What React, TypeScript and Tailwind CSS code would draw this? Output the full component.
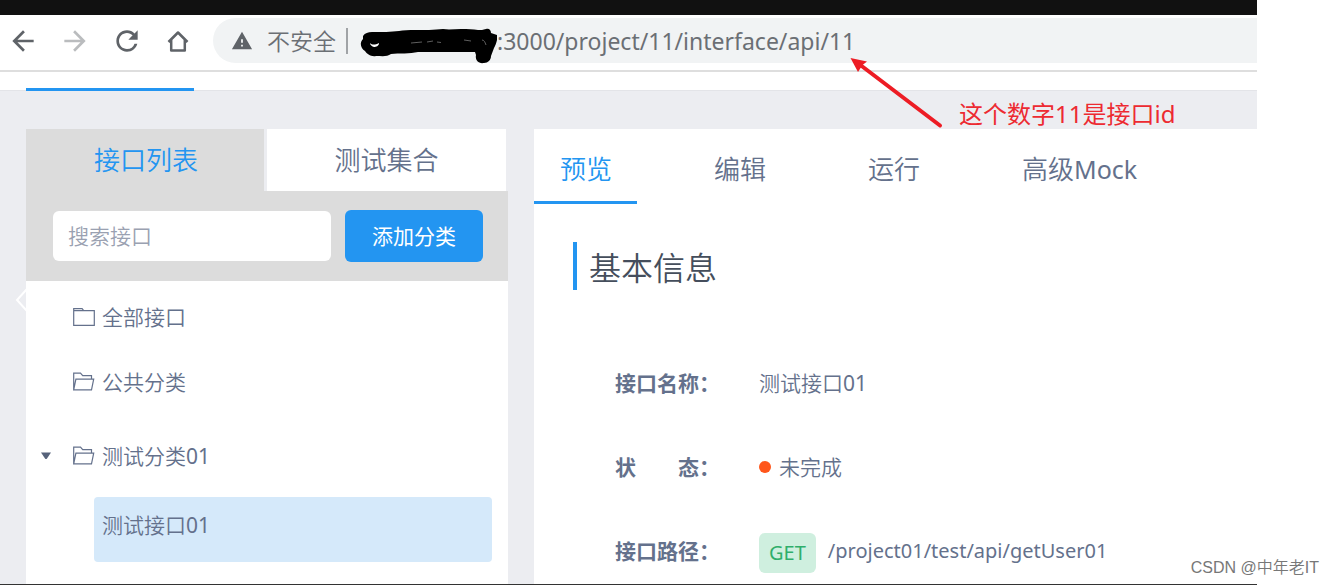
import { useState } from "react";
import type { ReactNode } from "react";
import { MdArrowBack, MdArrowForward, MdRefresh, MdWarning } from "react-icons/md";

function HomeIcon() {
  return (
    <svg width="32" height="32" viewBox="0 0 32 32" fill="none" stroke="#5f6368" strokeWidth="2.5" aria-hidden="true">
      <path d="M5.500 17 15 7.500 24.500 17M8.200 14.500V25.500h13.600V14.500" strokeLinejoin="round" />
    </svg>
  );
}

function FolderIcon() {
  return (
    <svg width="23" height="20" viewBox="0 0 23 20" fill="none" stroke="#64718c" strokeWidth="1.2" aria-hidden="true">
      <path d="M.7 18.300V1.700h8.400l1.600 2h10.600v14.600zM.7 3.700h10" />
    </svg>
  );
}

function FolderOpenIcon() {
  return (
    <svg width="23" height="20" viewBox="0 0 23 20" fill="none" stroke="#64718c" strokeWidth="1.2" aria-hidden="true">
      <path d="M.7 17.800V1.200h6.800l2.200 2.500h8.800v3.400M.7 17.800 2.900 7.100h17.800L18.500 17.800z" />
    </svg>
  );
}

function MaskedHost() {
  return (
    <svg width="137" height="46" viewBox="0 0 137 46" className="shrink-0" aria-hidden="true">
      <path
        d="M3 18c2-3 5-4 9-4 10 0 19 0 27-1 4-1 10-1 16-1 8 0 20 0 28-1 6 1 12 0 18 0 7 0 12 0 17 1 3 0 5 0 8-1 3-1 5 1 5 4l6 2c1 4-1 9-3 13l-3 8c0 4-3 7-7 7-6 1-9-3-8-8l-1-3H58c-8 2-19 1-27 2-4 3-9 2-15 2-5 1-9-2-11-5-4-2-6-8-2-12z"
        fill="#000"
      />
      <path d="M10 25c2 2 5 2 9 0 0 3-3 4-5 4-2-.5-4-2-4-4z" fill="#fff" />
      <path d="M51 25l11-1M67 24l6-1M77 24l4 .5M104 22l7 1M122 22c2 0 3 2 4 5" stroke="#888" strokeWidth="0.7" fill="none" />
    </svg>
  );
}

const detailTabs = [
  { name: "预览", suffix: "" },
  { name: "编辑", suffix: "" },
  { name: "运行", suffix: "" },
  { name: "高级", suffix: "Mock" },
];

function InfoRow({ label, children }: { label: ReactNode; children: ReactNode }) {
  return (
    <div className="flex h-[84px] items-center">
      <dt className="w-36 shrink-0 font-bold text-[#64718c]">{label}</dt>
      <dd className="flex items-center whitespace-nowrap">{children}</dd>
    </div>
  );
}

export default function App() {
  const [tab, setTab] = useState(detailTabs[0].name);
  return (
    <div className="relative min-h-screen bg-white pr-[76px] font-['Noto_Sans','Noto_Sans_CJK_SC',sans-serif] text-[21px] font-[350] leading-8 text-[#64718c]">
      <div className="relative flex min-h-screen flex-col overflow-hidden border-b border-[#333]">
        <div className="h-[15px] bg-[#111]" />
        <header className="flex h-[57px] items-start border-b-2 border-[#dedede] pt-[3px]">
          <nav className="flex h-[45px] w-[213px] shrink-0 items-center gap-5 pl-[7px] text-[32px] text-[#5f6368]">
            <button type="button" aria-label="后退"><MdArrowBack /></button>
            <button type="button" aria-label="前进" className="text-[#babcbe]"><MdArrowForward /></button>
            <button type="button" aria-label="刷新"><MdRefresh /></button>
            <button type="button" aria-label="主页"><HomeIcon /></button>
          </nav>
          <div className="flex h-[45px] min-w-0 flex-1 items-center rounded-l-full bg-[#f1f3f4] pl-[18px] text-[23px] text-[#6b6f74]">
            <MdWarning className="shrink-0 text-[22px] text-[#5f6368]" />
            <span className="ml-3.5 whitespace-nowrap">不安全</span>
            <span className="ml-2.5 mr-3 h-[26px] w-0.5 shrink-0 bg-[#a0a3a6]" />
            <MaskedHost />
            <input
              aria-label="地址栏"
              className="min-w-0 flex-1 bg-transparent font-normal outline-none"
              defaultValue=":3000/project/11/interface/api/11"
            />
          </div>
        </header>

        <div className="flex h-[19px] items-end border-b border-[#e3e4e8] pl-[26px]">
          <div className="z-10 -mb-px h-[3px] w-[168px] bg-[#2395f1]" />
        </div>

        <main className="relative flex flex-1 gap-[26px] bg-[#ecedf1] pl-[26px] pt-[38px]">
          <svg width="12" height="24" viewBox="0 0 12 24" className="absolute left-[15px] top-[197px]" fill="none" stroke="#fff" strokeWidth="2" aria-hidden="true">
            <path d="M12 1 2 12l10 11" />
          </svg>

          <aside className="w-[482px] shrink-0 bg-white">
            <div className="flex h-[62px] text-[26px]">
              <button type="button" className="w-[238px] bg-[#dcdcdc] pl-0.5 text-[#2395f1]">接口列表</button>
              <button type="button" className="flex-1 border-l-[3px] border-r-2 border-[#ecedf1] bg-white">测试集合</button>
            </div>
            <div className="flex h-[90px] items-center gap-3.5 bg-[#dcdcdc] pl-[27px] pr-[25px]">
              <input
                aria-label="搜索接口"
                placeholder="搜索接口"
                className="h-[50px] min-w-0 flex-1 rounded-md bg-white px-[15px] outline-none placeholder:text-[#9aa1b1]"
              />
              <button type="button" className="h-[52px] w-[138px] rounded-md bg-[#2395f1] font-normal text-white">添加分类</button>
            </div>
            <ul className="pb-4 pl-[47px]">
              <li className="flex h-[72px] items-center gap-1.5"><FolderIcon />全部接口</li>
              <li className="flex h-[58px] items-center gap-1.5"><FolderOpenIcon />公共分类</li>
              <li>
                <div className="relative mt-1.5 flex h-[78px] items-center gap-1.5">
                  <svg width="12" height="8" viewBox="0 0 12 8" className="absolute -left-[33px]" fill="#56627a" aria-hidden="true">
                    <path d="M1 .5h10L7 6.500Q6 7.500 5 6.500z" />
                  </svg>
                  <FolderOpenIcon />
                  <span>测试分类<span className="font-normal">01</span></span>
                </div>
                <a href="#api-11" className="ml-[21px] mr-4 mt-0.5 block h-[65px] rounded bg-[#d5e9fa] px-2 pt-3">
                  测试接口<span className="font-normal">01</span>
                </a>
              </li>
            </ul>
          </aside>

          <section className="min-w-0 flex-1 bg-white">
            <div className="flex h-[75px] gap-[51px] text-[26px]">
              {detailTabs.map(({ name, suffix }) => (
                <button
                  key={name}
                  type="button"
                  onClick={() => setTab(name)}
                  className={
                    name === tab
                      ? "whitespace-nowrap border-b-3 border-[#2395f1] pl-[26px] pr-[25px] pt-2 text-[#2395f1]"
                      : "whitespace-nowrap border-b-3 border-transparent pl-[26px] pr-[25px] pt-2"
                  }
                >
                  {name}
                  {suffix && <span className="text-[25px] font-normal">{suffix}</span>}
                </button>
              ))}
            </div>
            <h2 className="ml-[39px] mt-[38px] flex h-12 items-center border-l-4 border-[#2395f1] pl-3 pt-1 text-[32px] text-[#454e5c]">
              基本信息
            </h2>
            <dl className="-mb-6 pl-[81px] pt-[51px]">
              <InfoRow label="接口名称：">测试接口<span className="font-normal">01</span></InfoRow>
              <InfoRow label={<span className="flex"><span className="mr-[42px]">状</span>态：</span>}>
                <span className="mr-2 size-3 rounded-full bg-[#ff561b]" />未完成
              </InfoRow>
              <InfoRow label="接口路径：">
                <span className="mr-3 mt-1 flex h-10 items-center rounded-md bg-[#cfefdf] px-2.5 text-[20px] font-normal text-[#2fae6b]">GET</span>
                <span className="text-[20px] font-normal">/project01/test/api/getUser01</span>
              </InfoRow>
            </dl>
          </section>
        </main>

        <svg width="96" height="74" viewBox="0 0 96 74" className="absolute left-[848px] top-[55px]" aria-hidden="true">
          <path d="M13 10.500 92 70.500" stroke="#ed1c24" strokeWidth="4" strokeLinecap="round" />
          <path d="M2.500 3 19 6.500 14.500 10 10 17z" fill="#ed1c24" />
        </svg>
        <p className="absolute left-[959px] top-[98px] whitespace-nowrap text-[24px] font-normal text-[#ed2a31]">这个数字11是接口id</p>
      </div>
      <footer className="absolute bottom-px right-3.5 whitespace-nowrap font-['Liberation_Sans','Noto_Sans_CJK_SC',sans-serif] text-[16px] text-[#777]">
        CSDN @中年老IT
      </footer>
    </div>
  );
}
